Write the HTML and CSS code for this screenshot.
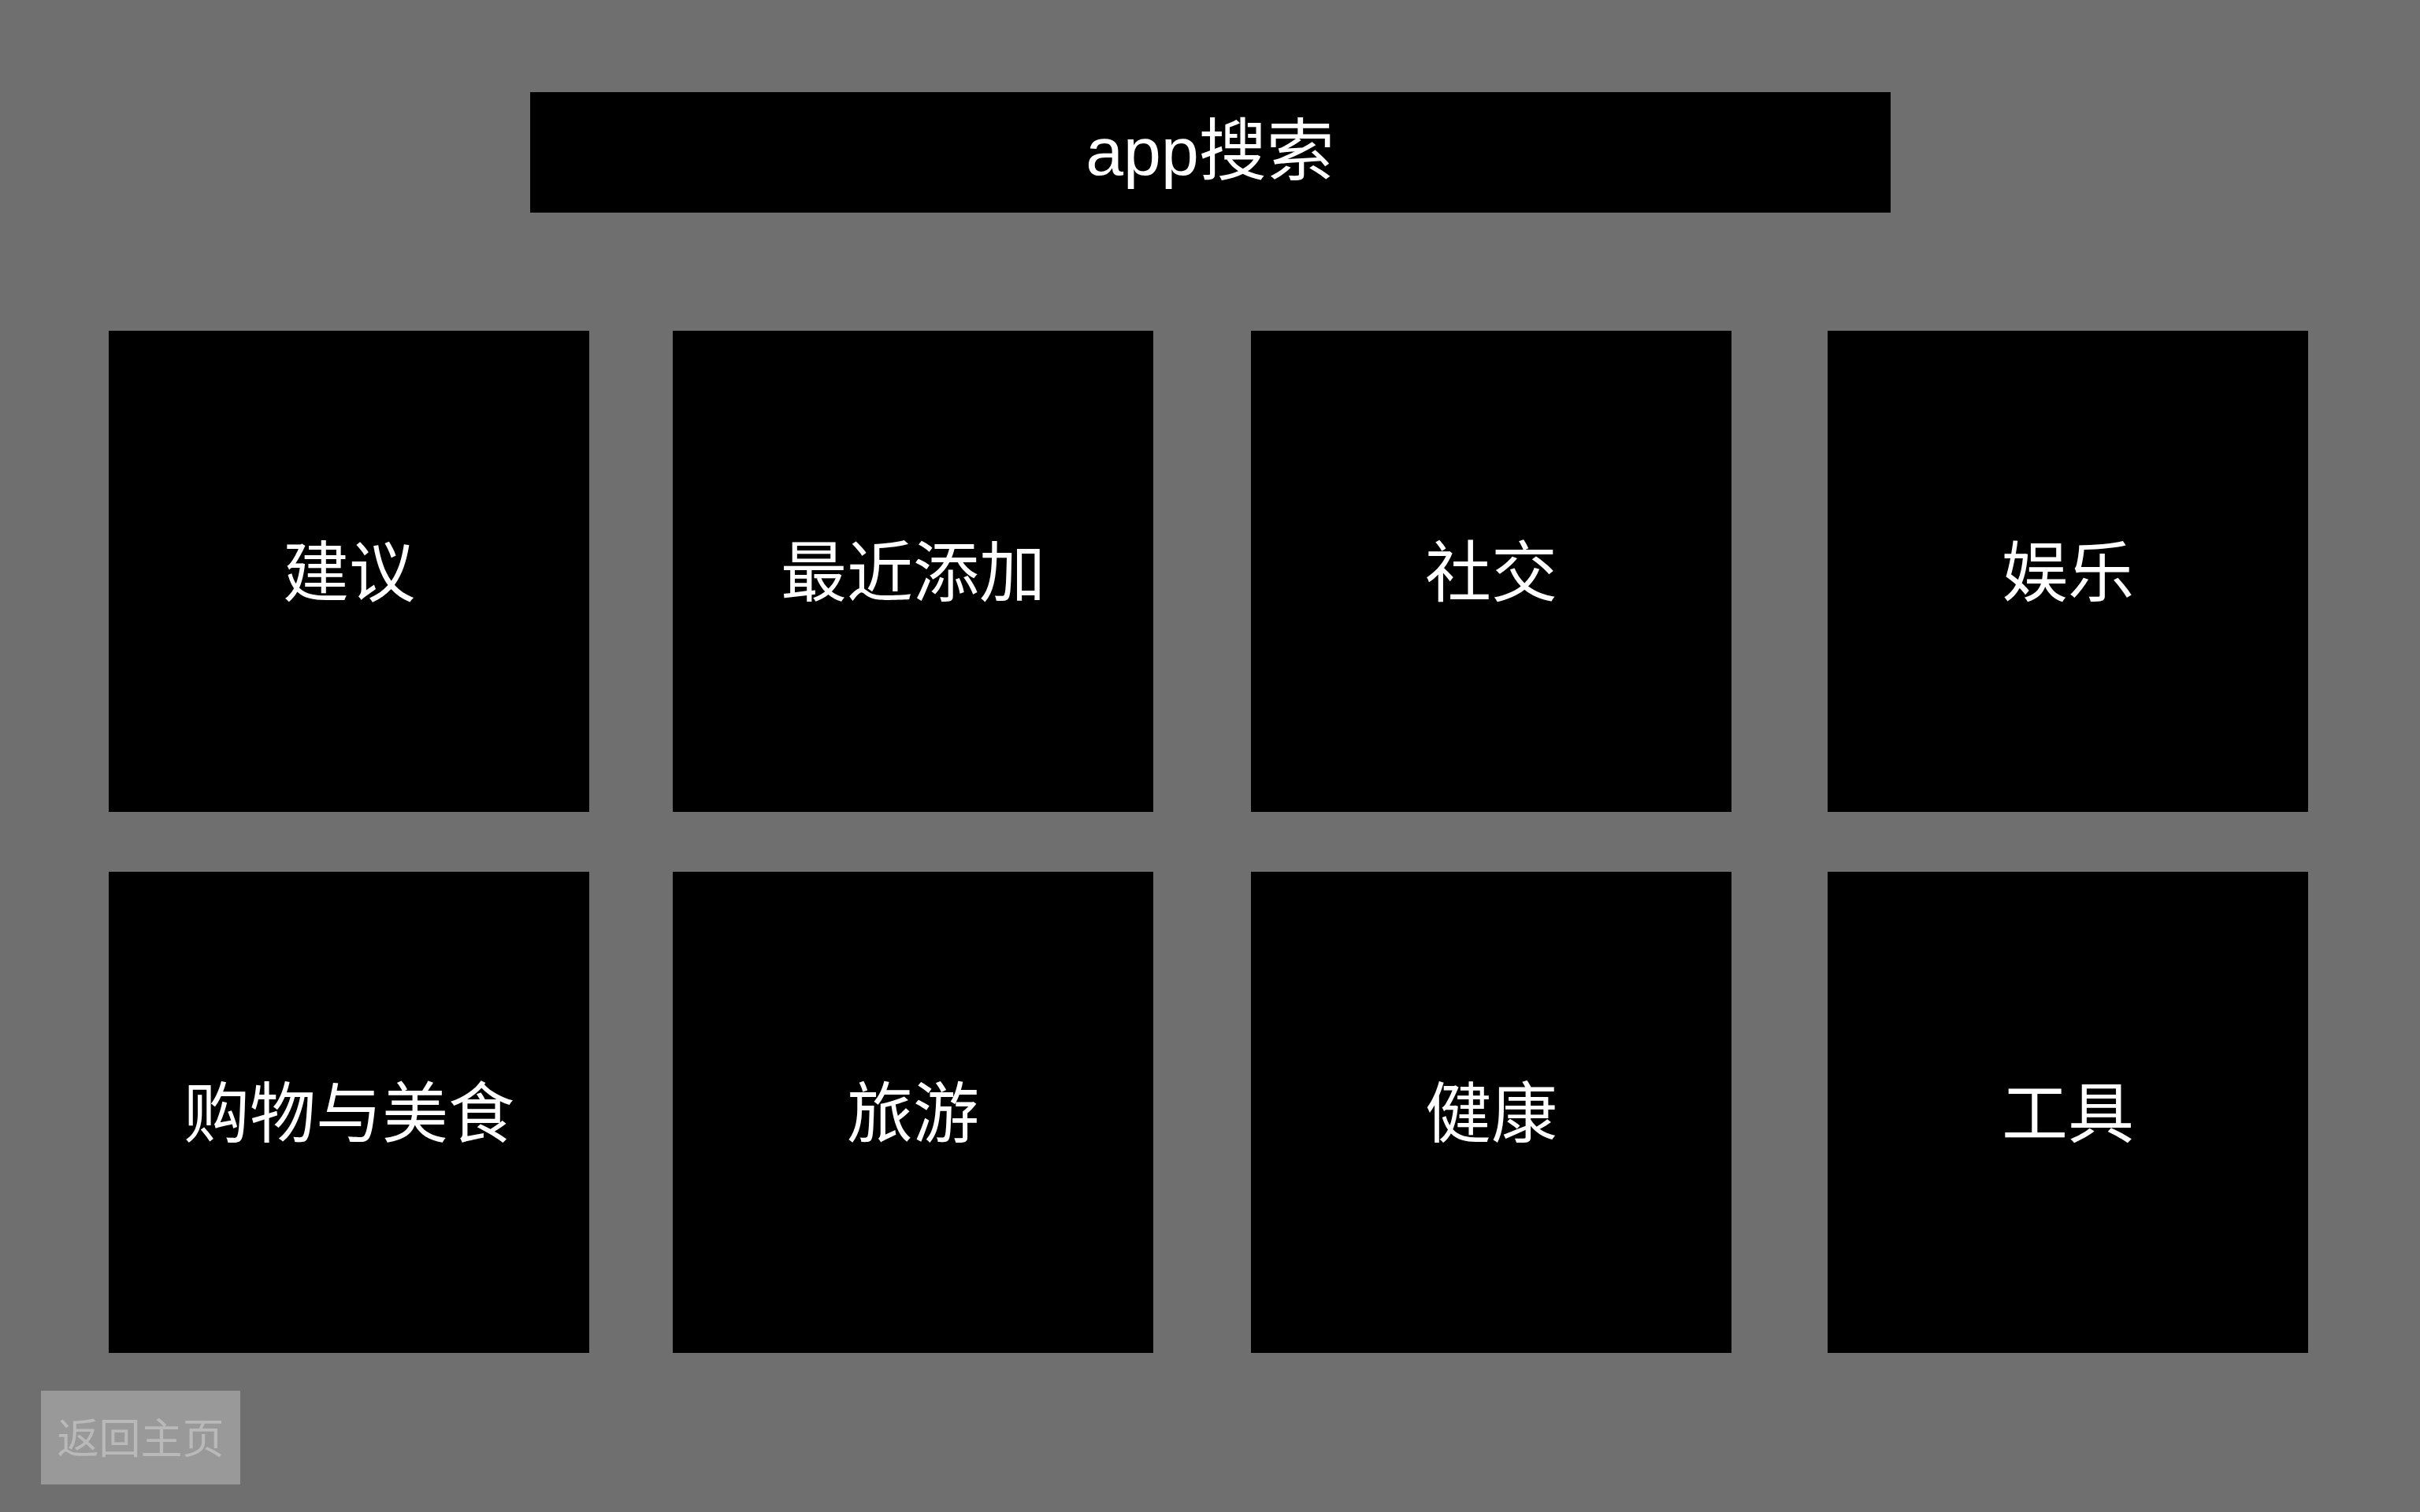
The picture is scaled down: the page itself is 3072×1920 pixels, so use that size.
FILE: index.html
```html
<!DOCTYPE html>
<html lang="zh-CN">
<head>
<meta charset="utf-8">
<title>app搜索</title>
<link rel="stylesheet" href="styles.css">
</head>
<body>
  <div class="page">
    <header class="search-bar">app搜索</header>
    <main class="grid">
      <div class="tile">建议</div>
      <div class="tile">最近添加</div>
      <div class="tile">社交</div>
      <div class="tile">娱乐</div>
      <div class="tile">购物与美食</div>
      <div class="tile">旅游</div>
      <div class="tile">健康</div>
      <div class="tile">工具</div>
    </main>
    <button class="home-btn" type="button">返回主页</button>
  </div>
</body>
</html>
```

FILE: styles.css
```css
html, body {
  margin: 0;
  padding: 0;
  background: #6f6f6f;
  height: 100%;
}

.page {
  width: 3072px;
  height: 1920px;
  overflow: hidden;
  display: flex;
  flex-direction: column;
  font-family: "Liberation Sans", "Noto Sans CJK SC", sans-serif;
  color: #ffffff;
}

.search-bar {
  align-self: center;
  margin-top: 117px;
  width: 1727px;
  height: 153px;
  box-sizing: border-box;
  padding-bottom: 4px;
  background: #000000;
  display: flex;
  align-items: center;
  justify-content: center;
  font-size: 86px;
  line-height: 1;
}

.grid {
  margin-top: 150px;
  padding-left: 138px;
  display: grid;
  grid-template-columns: 611px 629px 627px 609px;
  grid-auto-rows: 611px;
  column-gap: 105px;
  row-gap: 76px;
}

.tile {
  width: 610px;
  height: 611px;
  box-sizing: border-box;
  padding-bottom: 10px;
  background: #000000;
  display: flex;
  align-items: center;
  justify-content: center;
  font-family: "Noto Sans CJK SC", sans-serif;
  font-size: 84px;
  line-height: 1;
}

.home-btn {
  align-self: flex-start;
  margin-top: 48px;
  margin-left: 52px;
  width: 253px;
  height: 119px;
  padding: 0 0 4px 0;
  border: none;
  background: #999999;
  color: #b9b9b9;
  font-family: "Noto Sans CJK SC", sans-serif;
  font-size: 53px;
  line-height: 1;
  display: flex;
  align-items: center;
  justify-content: center;
}
```
